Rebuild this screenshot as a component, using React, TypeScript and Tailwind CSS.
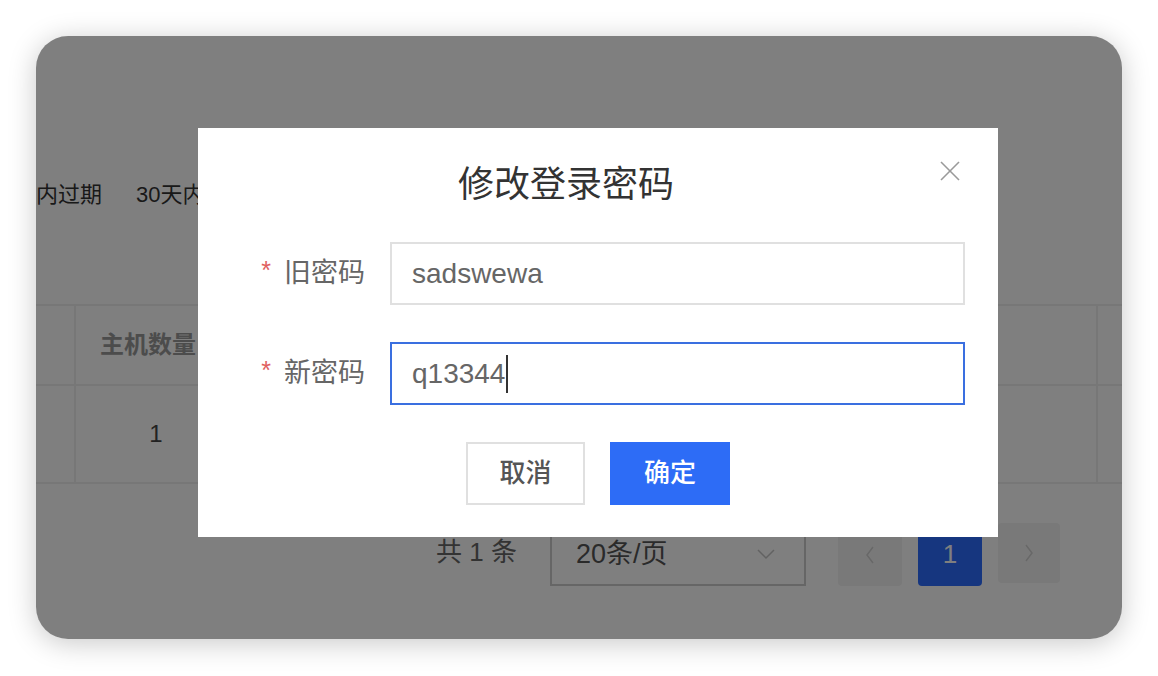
const FONT = "font-['Liberation_Sans','Noto_Sans_CJK_SC',sans-serif]";

function ChevronDown() {
  return (
    <svg width="20" height="12" viewBox="0 0 20 12" fill="none" stroke="#c4c4c4" strokeWidth="1.5">
      <polyline points="2 2 10 10 18 2" />
    </svg>
  );
}

function Chevron({ dir }: { dir: 'left' | 'right' }) {
  return (
    <svg width="10" height="18" viewBox="0 0 10 18" fill="none" stroke="#d0d0d0" strokeWidth="1.5">
      {dir === 'left' ? <polyline points="8 1 2 9 8 17" /> : <polyline points="2 1 8 9 2 17" />}
    </svg>
  );
}

function Background() {
  return (
    <div className="flex flex-col">
      <div className="mt-[136px] flex h-[44px] items-center gap-[34px] text-[22px] text-[#333]">
        <span>内过期</span>
        <span>30天内过期</span>
        <span>已过期</span>
      </div>

      <div className="mt-[88px] border-t-2 border-[#eee]">
        <div className="grid h-[80px] grid-cols-[40px_160px_1fr_24px] border-b-2 border-[#eee]">
          <div className="border-r-2 border-[#eee]" />
          <div className="flex items-center pl-[24px] text-[24px] font-semibold text-[#999] whitespace-nowrap">
            主机数量
          </div>
          <div className="border-r-2 border-[#eee]" />
          <div />
        </div>
        <div className="grid h-[98px] grid-cols-[40px_160px_1fr_24px] border-b-2 border-[#eee]">
          <div className="border-r-2 border-[#eee]" />
          <div className="flex items-center justify-center text-[24px] text-[#444]">1</div>
          <div className="border-r-2 border-[#eee]" />
          <div />
        </div>
      </div>

      <div className="mt-[38px] flex items-end justify-end pr-[62px]">
        <span className="mb-[14px] mr-[33px] text-[26px] text-[#666]">共 1 条</span>
        <div className="flex h-[64px] w-[256px] items-center justify-between border-2 border-[#ccc] pl-[24px] pr-[28px] text-[27px] text-[#555]">
          <span>20条/页</span>
          <ChevronDown />
        </div>
        <div className="ml-[32px] flex h-[63px] w-[64px] items-center justify-center rounded bg-[#f3f3f3]">
          <Chevron dir="left" />
        </div>
        <div className="ml-[16px] flex h-[63px] w-[64px] items-center justify-center rounded bg-[#2c6cff] text-[26px] text-white">
          1
        </div>
        <div className="ml-[16px] mb-[3px] flex h-[60px] w-[62px] items-center justify-center rounded bg-[#f3f3f3]">
          <Chevron dir="right" />
        </div>
      </div>
    </div>
  );
}

function Field({ label, value, focused }: { label: string; value: string; focused?: boolean }) {
  return (
    <div className="flex items-center">
      <div className="flex w-[167px] items-center justify-end">
        <span className="mr-[13px] -mt-[6px] text-[25px] text-[#e06060]">*</span>
        <span className="text-[27px] text-[#666]">{label}</span>
      </div>
      <div
        className={`ml-[25px] flex h-[63px] w-[575px] items-center border-2 pl-[20px] text-[28px] text-[#666] ${
          focused ? 'border-[#3a6fe0]' : 'border-[#e0e0e0]'
        }`}
      >
        <span>{value}</span>
        {focused && <span className="ml-[1px] h-[38px] w-[2px] bg-[#333]" />}
      </div>
    </div>
  );
}

function Modal() {
  return (
    <div className="absolute left-[162px] top-[92px] flex w-[800px] flex-col bg-white pt-[27px] pb-[32px]">
      <div className="flex h-[60px] items-center justify-center pr-[64px] text-[36px] text-[#333]">
        修改登录密码
      </div>
      <button className="absolute right-[38px] top-[33px] h-[20px] w-[20px]">
        <svg width="20" height="20" viewBox="0 0 20 20" stroke="#9a9a9a" strokeWidth="1.6">
          <line x1="1" y1="1" x2="19" y2="19" />
          <line x1="19" y1="1" x2="1" y2="19" />
        </svg>
      </button>

      <div className="mt-[27px] flex flex-col gap-[37px]">
        <Field label="旧密码" value="sadswewa" />
        <Field label="新密码" value="q13344" focused />
      </div>

      <div className="mt-[37px] flex justify-center gap-[25px]">
        <button className="h-[63px] w-[119px] border-2 border-[#e0e0e0] bg-white text-[26px] font-medium text-[#555]">
          取消
        </button>
        <button className="h-[63px] w-[120px] bg-[#2d6cf6] text-[26px] font-medium text-white">确定</button>
      </div>
    </div>
  );
}

export default function App() {
  return (
    <div className={`min-h-[676px] bg-white p-[36px] ${FONT}`}>
      <div className="relative h-[603px] w-[1086px] overflow-hidden rounded-[32px] bg-white shadow-[0_4px_28px_rgba(0,0,0,0.22)]">
        <Background />
        <div className="absolute inset-0 bg-black/50" />
        <Modal />
      </div>
    </div>
  );
}
